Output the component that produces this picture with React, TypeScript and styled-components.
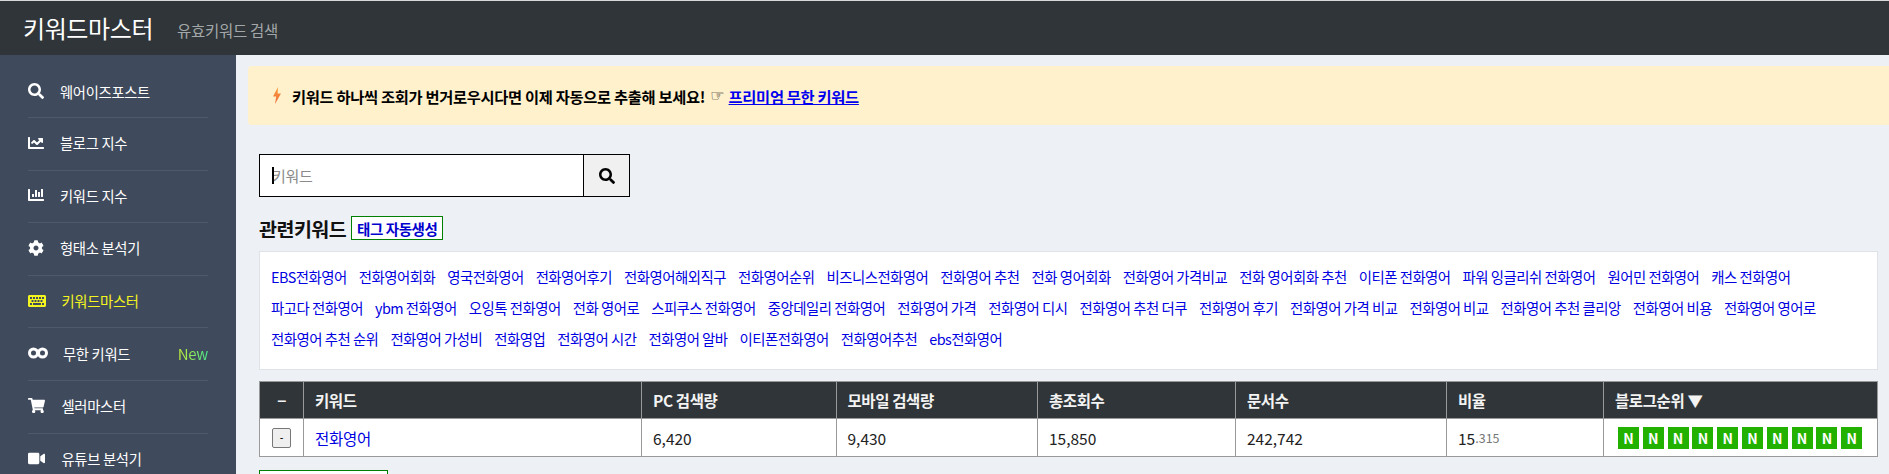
import React from "react";
import styled, { createGlobalStyle } from "styled-components";
import { FaSearch, FaChartLine, FaChartBar, FaCog, FaKeyboard, FaShoppingCart, FaVideo } from "react-icons/fa";

const Global = createGlobalStyle`
  html, body { margin: 0; padding: 0; height: 474px; overflow: hidden; background: #edf0f5; }
  body { font-family: "Noto Sans CJK KR", "Noto Sans", sans-serif; }
  * { box-sizing: border-box; }
`;
const Page = styled.div`height: 474px; overflow: hidden; display: flex; flex-direction: column; border-top: 1px solid #d8d8d8;`;
const Header = styled.header`height: 54px; flex: none; background: #2f3538; display: flex; align-items: center; padding: 0 0 0 23px; gap: 24px;`;
const Brand = styled.div`color: #fff; font-size: 24px; letter-spacing: -0.4px; line-height: 1;`;
const Sub = styled.div`color: #a3a7a9; font-size: 15.5px; letter-spacing: -0.3px; padding-top: 4px;`;
const Body = styled.div`display: flex; flex: 1; min-height: 0;`;
const Side = styled.nav`width: 236px; flex: none; background: #3f4a5c; padding: 0 28px;`;
const Item = styled.div<{ $on?: boolean }>`
  height: 52.6px; display: flex; align-items: center; color: ${p => p.$on ? "#f4f41e" : "#fff"};
  font-size: 14.3px; letter-spacing: -0.3px; border-bottom: 1px solid #4f596b; padding-bottom: 2px;
  &:first-child { height: 63px; padding: 10px 0 0; }
`;
const Ico = styled.span<{ $w?: number; $s?: number }>`display: inline-flex; width: ${p => p.$w ?? 32}px; flex: none; font-size: ${p => p.$s ?? 16}px;`;
const New = styled.span`margin-left: auto; font-size: 15px; letter-spacing: -0.3px; background: linear-gradient(90deg, #c2ee3a, #49e58a); -webkit-background-clip: text; background-clip: text; color: transparent;`;
const Main = styled.main`flex: 1; min-width: 0; padding: 11px 11px 0 12px;`;
const Alert = styled.div`height: 59px; background: #fff1cc; border-radius: 4px 0 0 4px; margin-right: -11px; display: flex; align-items: center; padding-left: 24px; color: #000; font-size: 15.3px; font-weight: 700; letter-spacing: -0.3px;`;
const Bolt = styled.svg`width: 10px; height: 17px; margin-right: 10px; flex: none;`;
const Hand = styled.span`font-family: "DejaVu Sans", sans-serif; font-weight: 400; font-size: 16px; margin-left: 5px; letter-spacing: 0;`;
const Premium = styled.a`color: #0000ee; text-decoration: underline; margin-left: 4px;`;
const Inner = styled.div`padding: 29px 0 0 11px;`;
const SearchRow = styled.div`display: flex; width: 371px; height: 43px; border: 1px solid #000; background: #fff;`;
const InputWrap = styled.div`position: relative; flex: 1; display: flex;`;
const Input = styled.input`flex: 1; width: 100%; border: 0; outline: 0; padding: 0 12px; font: inherit; font-size: 15px; letter-spacing: -0.3px; background: transparent; &::placeholder { color: #8a8a8a; }`;
const Caret = styled.span`position: absolute; left: 12px; top: 12px; width: 2px; height: 17px; background: #000;`;
const SearchBtn = styled.button`width: 46px; border: 0; border-left: 1px solid #000; background: #f0f0f0; display: flex; align-items: center; justify-content: center; font-size: 16px; color: #000; padding: 0;`;
const TitleRow = styled.div`display: flex; align-items: center; gap: 5px; margin-top: 19px; height: 24px;`;
const Title = styled.h3`margin: 0; font-size: 19.5px; font-weight: 700; color: #111; letter-spacing: -0.5px;`;
const Tag = styled.a`display: flex; align-items: center; justify-content: center; width: 92px; height: 24px; border: 1px solid #008000; background: #fff; color: #0000cd; font-size: 14.5px; font-weight: 700; letter-spacing: -0.4px;`;
const Panel = styled.div`margin-top: 11px; height: 119px; background: #fff; border: 1px solid #dfe2e7; padding: 9px 11px; display: flex; flex-wrap: wrap; align-content: flex-start; column-gap: 12px; line-height: 31px;`;
const Kw = styled.a`color: #0000e0; font-size: 14.4px; letter-spacing: -0.5px; white-space: nowrap;`;
const Table = styled.div`margin-top: 11px; border: 1px solid #999; display: grid; grid-template-columns: 43px 338px 194.5px 201.5px 198px 211px 157px 1fr; background: #fff;`;
const Th = styled.div`height: 37px; background: #2f3538; color: #f3f3f3; font-size: 15.5px; font-weight: 700; letter-spacing: -0.4px; display: flex; align-items: center; padding-left: 11px; border-left: 1px solid #999; border-bottom: 1px solid #999; &:first-child { border-left: 0; justify-content: center; padding: 0; }`;
const Td = styled.div`height: 37px; color: #222; font-size: 15.5px; display: flex; align-items: center; padding-left: 11px; border-left: 1px solid #999; &:nth-child(8n+1) { border-left: 0; justify-content: center; padding: 0; }`;
const Mini = styled.button`width: 19px; height: 20px; border: 1px solid #777; border-radius: 2px; background: #efefef; font-size: 11px; line-height: 1; padding: 0; color: #000;`;
const RowLink = styled.a`color: #0000e0; letter-spacing: -0.3px;`;
const Dim = styled.span`color: #777; font-size: 12.5px;`;
const Badges = styled.div`display: flex; gap: 3.8px; margin-left: 3px;`;
const Badge = styled.span`width: 21px; height: 22px; background: #23b100; color: #fff; font-size: 14px; font-weight: 700; display: flex; align-items: center; justify-content: center;`;
const Green = styled.div`margin-top: 13px; width: 129px; height: 24px; border: 1px solid #008000; background: #fff;`;

const rows = ["EBS전화영어","전화영어회화","영국전화영어","전화영어후기","전화영어해외직구","전화영어순위","비즈니스전화영어","전화영어 추천","전화 영어회화","전화영어 가격비교","전화 영어회화 추천","이티폰 전화영어","파워 잉글리쉬 전화영어","원어민 전화영어","캐스 전화영어","파고다 전화영어","ybm 전화영어","오잉톡 전화영어","전화 영어로","스피쿠스 전화영어","중앙데일리 전화영어","전화영어 가격","전화영어 디시","전화영어 추천 더쿠","전화영어 후기","전화영어 가격 비교","전화영어 비교","전화영어 추천 클리앙","전화영어 비용","전화영어 영어로","전화영어 추천 순위","전화영어 가성비","전화영업","전화영어 시간","전화영어 알바","이티폰전화영어","전화영어추천","ebs전화영어"];

export default function App() {
  return (
    <Page>
      <Global />
      <Header><Brand>키워드마스터</Brand><Sub>유효키워드 검색</Sub></Header>
      <Body>
        <Side>
          <Item><Ico><FaSearch /></Ico>웨어이즈포스트</Item>
          <Item><Ico><FaChartLine /></Ico>블로그 지수</Item>
          <Item><Ico><FaChartBar /></Ico>키워드 지수</Item>
          <Item><Ico><FaCog /></Ico>형태소 분석기</Item>
          <Item $on><Ico $w={33.5} $s={18}><FaKeyboard /></Ico>키워드마스터</Item>
          <Item>
            <Ico $w={35}>
              <svg width="20" height="12" viewBox="0 0 20 12" fill="none" stroke="#fff" strokeWidth="3"><circle cx="5.5" cy="6" r="4"/><circle cx="14.5" cy="6" r="4"/></svg>
            </Ico>
            무한 키워드<New>New</New>
          </Item>
          <Item><Ico $w={33.5} $s={17}><FaShoppingCart /></Ico>셀러마스터</Item>
          <Item><Ico $w={33.5} $s={17}><FaVideo /></Ico>유튜브 분석기</Item>
        </Side>
        <Main>
          <Alert>
            <Bolt viewBox="0 0 10 17">
              <defs><linearGradient id="bolt" x1="0" y1="0" x2="0" y2="1"><stop offset="0" stopColor="#f9a03a"/><stop offset="1" stopColor="#f0663c"/></linearGradient></defs>
              <path d="M6 0 L1 9.5 H4.2 L3 17 L9 6.5 H5.6 Z" fill="url(#bolt)"/>
            </Bolt>
            키워드 하나씩 조회가 번거로우시다면 이제 자동으로 추출해 보세요!<Hand>☞</Hand><Premium>프리미엄 무한 키워드</Premium>
          </Alert>
          <Inner>
            <SearchRow>
              <InputWrap><Input placeholder="키워드" readOnly /><Caret /></InputWrap>
              <SearchBtn><FaSearch /></SearchBtn>
            </SearchRow>
            <TitleRow><Title>관련키워드</Title><Tag>태그 자동생성</Tag></TitleRow>
            <Panel>{rows.map((r, i) => <Kw key={i}>{r}</Kw>)}</Panel>
            <Table>
              <Th>−</Th><Th>키워드</Th><Th>PC 검색량</Th><Th>모바일 검색량</Th><Th>총조회수</Th><Th>문서수</Th><Th>비율</Th><Th>블로그순위 ▼</Th>
              <Td><Mini>-</Mini></Td><Td><RowLink>전화영어</RowLink></Td><Td>6,420</Td><Td>9,430</Td><Td>15,850</Td><Td>242,742</Td><Td>15<Dim>.315</Dim></Td>
              <Td><Badges>{Array.from({ length: 10 }, (_, i) => <Badge key={i}>N</Badge>)}</Badges></Td>
            </Table>
            <Green />
          </Inner>
        </Main>
      </Body>
    </Page>
  );
}
